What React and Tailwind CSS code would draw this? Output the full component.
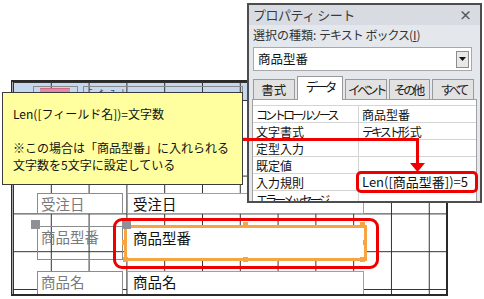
import React from "react";

const gridBg =
  "bg-[linear-gradient(to_right,#333_1px,transparent_1px),linear-gradient(to_bottom,#333_1px,transparent_1px)] bg-[size:37.8px_37.8px]";

// kana runs are drawn narrower, the way the original UI font sets them
const K = ({ children, t = "tracking-[-3px]" }) => <span className={t}>{children}</span>;

const PropRow = ({ name, value }) => (
  <div className="flex h-[17px] border-b border-[#d4d4d4] text-[12px] leading-[17px] text-[#111]">
    <div className="w-[106px] shrink-0 pl-[3px] border-r border-[#d4d4d4] whitespace-nowrap overflow-hidden">{name}</div>
    <div className="flex-1 pl-[3px] whitespace-nowrap">{value}</div>
  </div>
);

const Tab = ({ children, active }) =>
  active ? (
    <div className="h-[24px] w-[47px] bg-white border border-b-0 border-[#9a9a9a] text-[12.5px] leading-[20px] text-center text-[#111] whitespace-nowrap">
      {children}
    </div>
  ) : (
    <div className="h-[21px] w-[42px] bg-[#e2e2e2] border border-[#9a9a9a] text-[12.5px] leading-[19px] text-center text-[#222] whitespace-nowrap overflow-hidden">
      {children}
    </div>
  );

function PropertySheet() {
  return (
    <div className="absolute left-[247px] top-[3px] w-[235px] h-[200px] border-2 border-[#4d4d4d] bg-[#e4e7eb] overflow-hidden">
      <div className="h-[20px] bg-[#d8dce2] flex items-center justify-between pl-[4px] pr-[8px]">
        <span className="text-[13px] text-[#3a3a3a] tracking-[-0.5px]">プロパティ シート</span>
        <span className="text-[13px] font-bold text-[#555]">×</span>
      </div>
      <div className="pl-[4px] pr-[6px]">
        <div className="h-[20px] text-[12px] leading-[20px] text-[#333] whitespace-nowrap">
          選択の種類: <K t="tracking-[-1px]">テキスト</K> <K t="tracking-[-1px]">ボックス</K>(<span className="underline">I</span>)
        </div>
        <div className="mt-[2px] h-[24px] w-[219px] bg-white border border-[#a8a8a8] flex items-center justify-between pl-[4px] pr-[2px]">
          <span className="text-[12.5px] text-[#111]">商品型番</span>
          <div className="w-[13px] h-[17px] bg-[#e8e8e8] border border-[#8c8c8c] flex items-center justify-center">
            <svg width="7" height="4" viewBox="0 0 7 4">
              <polygon points="0,0 7,0 3.5,4" fill="#111" />
            </svg>
          </div>
        </div>
        <div className="mt-[5px] flex items-end gap-[2px] h-[24px]">
          <Tab>書式</Tab>
          <Tab active>
            <K>データ</K>
          </Tab>
          <Tab>
            <K t="tracking-[-3.5px]">イベント</K>
          </Tab>
          <Tab>
            <K>その</K>他
          </Tab>
          <Tab>
            <K t="tracking-[-3.5px]">すべて</K>
          </Tab>
        </div>
      </div>
      <div className="ml-[3px] mr-[3px] -mt-[1px] bg-white border border-[#a0a0a0] pt-[5px] h-[110px]">
        <div className="border-t border-[#d4d4d4]">
          <PropRow name={<K>コントロールソース</K>} value="商品型番" />
          <PropRow name="文字書式" value={<><K>テキスト</K>形式</>} />
          <PropRow name="定型入力" value="" />
          <PropRow name="既定値" value="" />
          <PropRow name="入力規則" value="" />
          <PropRow name={<K>エラーメッセージ</K>} value="" />
        </div>
      </div>
    </div>
  );
}

function FormDesign() {
  return (
    <div className="ml-[11px] mt-[80px] w-[437px] h-[216px] border-y-2 border-r-2 border-l border-[#2a2a2a] flex flex-col overflow-hidden">
      <div className="flex-1 flex flex-col border-l border-[#a8a8a8]">
        <div className={`h-[18px] bg-[#c6d8ee] ${gridBg} flex items-start pt-[4px] pl-[20px] gap-[5px]`}>
          <div className="w-[45px] h-[14px] border border-[#8a8a8a] pl-[6px] pt-[1px]">
            <div className="w-[30px] h-[6px] bg-[#e08aa5] border-t border-[#c86a88]" />
          </div>
          <div className="w-[160px] h-[14px] border border-[#8a8a8a] pl-[4px] text-[10px] leading-[12px] text-[#1f4e8c] tracking-[6px]">
            ﾃｷｽﾄ
          </div>
        </div>
        <div className={`flex-1 ${gridBg} flex flex-col pl-[24px] pt-[93px] text-[14.5px]`}>
          <div className="flex gap-[4px]">
            <div className="w-[86px] h-[21px] bg-white border border-[#8c8c8c] pl-[3px] leading-[19px] text-[#7a7a7a]">受注日</div>
            <div className="w-[237px] h-[21px] bg-white border border-[#a0a0a0] pl-[5px] leading-[19px] text-[#111]">受注日</div>
          </div>
          <div className="mt-[11px] flex items-start gap-[1px]">
            <div className="relative mt-[1px] w-[86px] h-[34px] border border-[#8c8c8c] pl-[3px] leading-[20px] text-[#7a7a7a]">
              商品型番
              <div className="absolute -left-[7px] -top-[7px] w-[9px] h-[9px] bg-[#8e9096]" />
            </div>
            <div className="relative w-[243px] h-[36px] border-[3px] border-[#f7a443] bg-white pl-[6px] leading-[20px] text-[#111]">
              商品型番
              <div className="absolute -left-[5px] -top-[8px] w-[9px] h-[9px] bg-[#8e9096]" />
              <div className="absolute left-[116px] -top-[6px] w-[5px] h-[5px] bg-[#f7a443]" />
              <div className="absolute left-[233px] -top-[6px] w-[5px] h-[5px] bg-[#f7a443]" />
              <div className="absolute left-[236px] top-[12px] w-[4px] h-[5px] bg-[#f7a443]" />
              <div className="absolute left-[233px] top-[29px] w-[5px] h-[5px] bg-[#f7a443]" />
              <div className="absolute left-[116px] top-[29px] w-[5px] h-[5px] bg-[#f7a443]" />
              <div className="absolute -left-[4px] top-[29px] w-[5px] h-[5px] bg-[#f7a443]" />
              <div className="absolute -left-[5px] top-[12px] w-[4px] h-[5px] bg-[#f7a443]" />
            </div>
          </div>
          <div className="mt-[10px] flex gap-[4px]">
            <div className="w-[86px] h-[26px] bg-white border border-[#8c8c8c] pl-[3px] leading-[20px] text-[#7a7a7a]">商品名</div>
            <div className="w-[237px] h-[26px] bg-white border border-[#a0a0a0] pl-[5px] leading-[20px] text-[#111]">商品名</div>
          </div>
        </div>
      </div>
    </div>
  );
}

export default function App() {
  return (
    <div className="relative w-[484px] h-[299px] overflow-hidden bg-white font-['Noto_Sans_CJK_JP','Noto_Sans',sans-serif]">
      <FormDesign />

      <div className="absolute left-[2px] top-[92px] w-[241px] h-[93px] bg-[#ffff9f] border border-[#3c3c3c] pl-[10px] pt-[12px] text-[12px] leading-[17px] text-[#111]">
        <div>Len([フィールド名])=文字数</div>
        <div className="h-[17px]" />
        <div>※この場合は「商品型番」に入れられる</div>
        <div>文字数を5文字に設定している</div>
      </div>

      <PropertySheet />

      <svg className="absolute left-0 top-0 pointer-events-none" width="484" height="299" viewBox="0 0 484 299">
        <path d="M243 139.5 H417.5 V164" fill="none" stroke="#ee0000" strokeWidth="3" />
        <polygon points="410,163 425,163 417.5,172" fill="#ee0000" />
      </svg>

      <div className="absolute left-[356px] top-[171px] w-[122px] h-[22px] border-[3px] border-[#ee0000] rounded-[5px] bg-white pl-[3px] text-[13px] leading-[16px] text-[#111] whitespace-nowrap">
        Len([商品型番])=5
      </div>

      <div className="absolute left-[113px] top-[218px] w-[266px] h-[51px] border-[3px] border-[#ee0000] rounded-[9px] pointer-events-none" />
    </div>
  );
}
